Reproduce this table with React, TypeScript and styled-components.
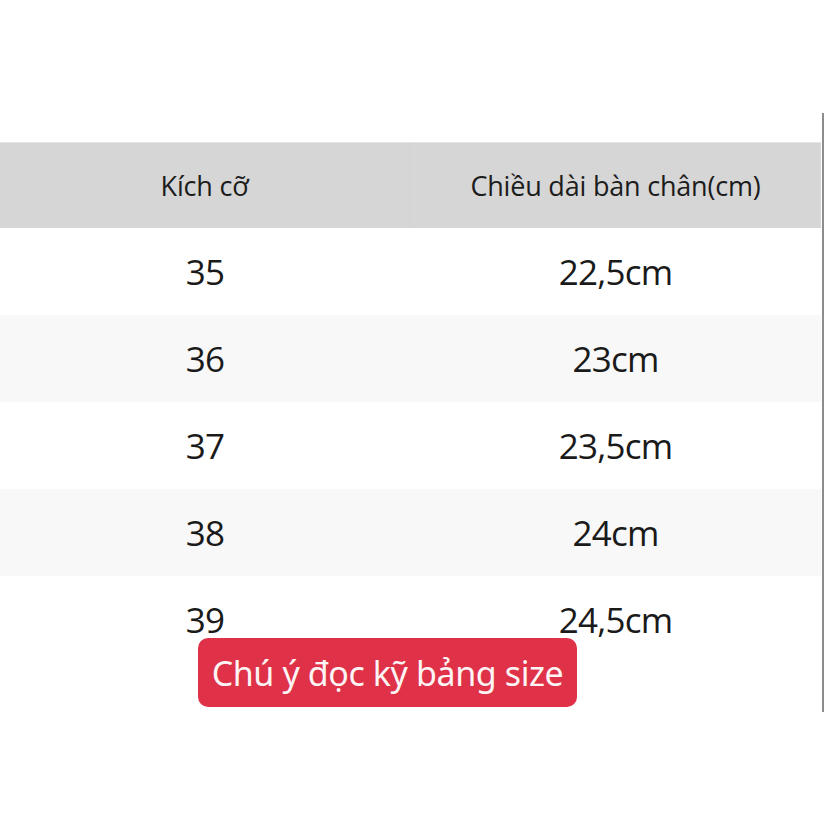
import React from "react";
import styled, { createGlobalStyle } from "styled-components";

const GlobalStyle = createGlobalStyle`
  html, body {
    margin: 0;
    padding: 0;
    background: #ffffff;
  }
  body {
    font-family: "Open Sans", "Noto Sans", sans-serif;
    color: #1a1a1a;
  }
`;

const rows = [
  { size: "35", length: "22,5cm" },
  { size: "36", length: "23cm" },
  { size: "37", length: "23,5cm" },
  { size: "38", length: "24cm" },
  { size: "39", length: "24,5cm" },
];

export default function App() {
  return (
    <>
      <GlobalStyle />
      <SPage>
        <SFrame>
          <STable>
            <SHeader>
              <SHeadCell $divider>Kích cỡ</SHeadCell>
              <SHeadCell>Chiều dài bàn chân(cm)</SHeadCell>
            </SHeader>
            {rows.map((r, i) => (
              <SRow key={r.size} $striped={i % 2 === 1}>
                <SCell>{r.size}</SCell>
                <SCell>{r.length}</SCell>
              </SRow>
            ))}
          </STable>
          <SNotice>Chú ý đọc kỹ bảng size</SNotice>
        </SFrame>
      </SPage>
    </>
  );
}

const SPage = styled.div`
  width: 825px;
  height: 825px;
  padding-top: 113px;
  box-sizing: border-box;
  overflow: hidden;
`;

const SFrame = styled.div`
  position: relative;
  width: 824px;
  height: 599px;
  box-sizing: border-box;
  border-right: 2px solid #8c8c8c;
  padding-top: 29px;
  padding-right: 1px;
`;

const STable = styled.div`
  display: flex;
  flex-direction: column;
`;

const SHeader = styled.div`
  display: grid;
  grid-template-columns: 410px 1fr;
  height: 86px;
  background: #d6d6d6;
  border-top: 1px solid #e4e4e4;
  box-sizing: border-box;
`;

const SHeadCell = styled.div<{ $divider?: boolean }>`
  display: flex;
  align-items: center;
  justify-content: center;
  font-size: 27px;
  letter-spacing: -0.2px;
  color: #1c1c1c;
  border-right: ${(p) => (p.$divider ? "1px solid #d2d2d2" : "none")};
`;

const SRow = styled.div<{ $striped: boolean }>`
  display: grid;
  grid-template-columns: 410px 1fr;
  height: 87px;
  background: ${(p) => (p.$striped ? "#f8f8f8" : "#ffffff")};
`;

const SCell = styled.div`
  display: flex;
  align-items: center;
  justify-content: center;
  font-size: 35px;
  letter-spacing: -0.8px;
  color: #1a1a1a;
`;

const SNotice = styled.div`
  position: absolute;
  left: 198px;
  top: 525px;
  width: 379px;
  height: 69px;
  display: flex;
  align-items: center;
  justify-content: center;
  background: #df3248;
  border-radius: 10px;
  color: #fdf4f5;
  font-family: "Noto Sans", "Open Sans", sans-serif;
  font-size: 34px;
  letter-spacing: -0.4px;
`;
